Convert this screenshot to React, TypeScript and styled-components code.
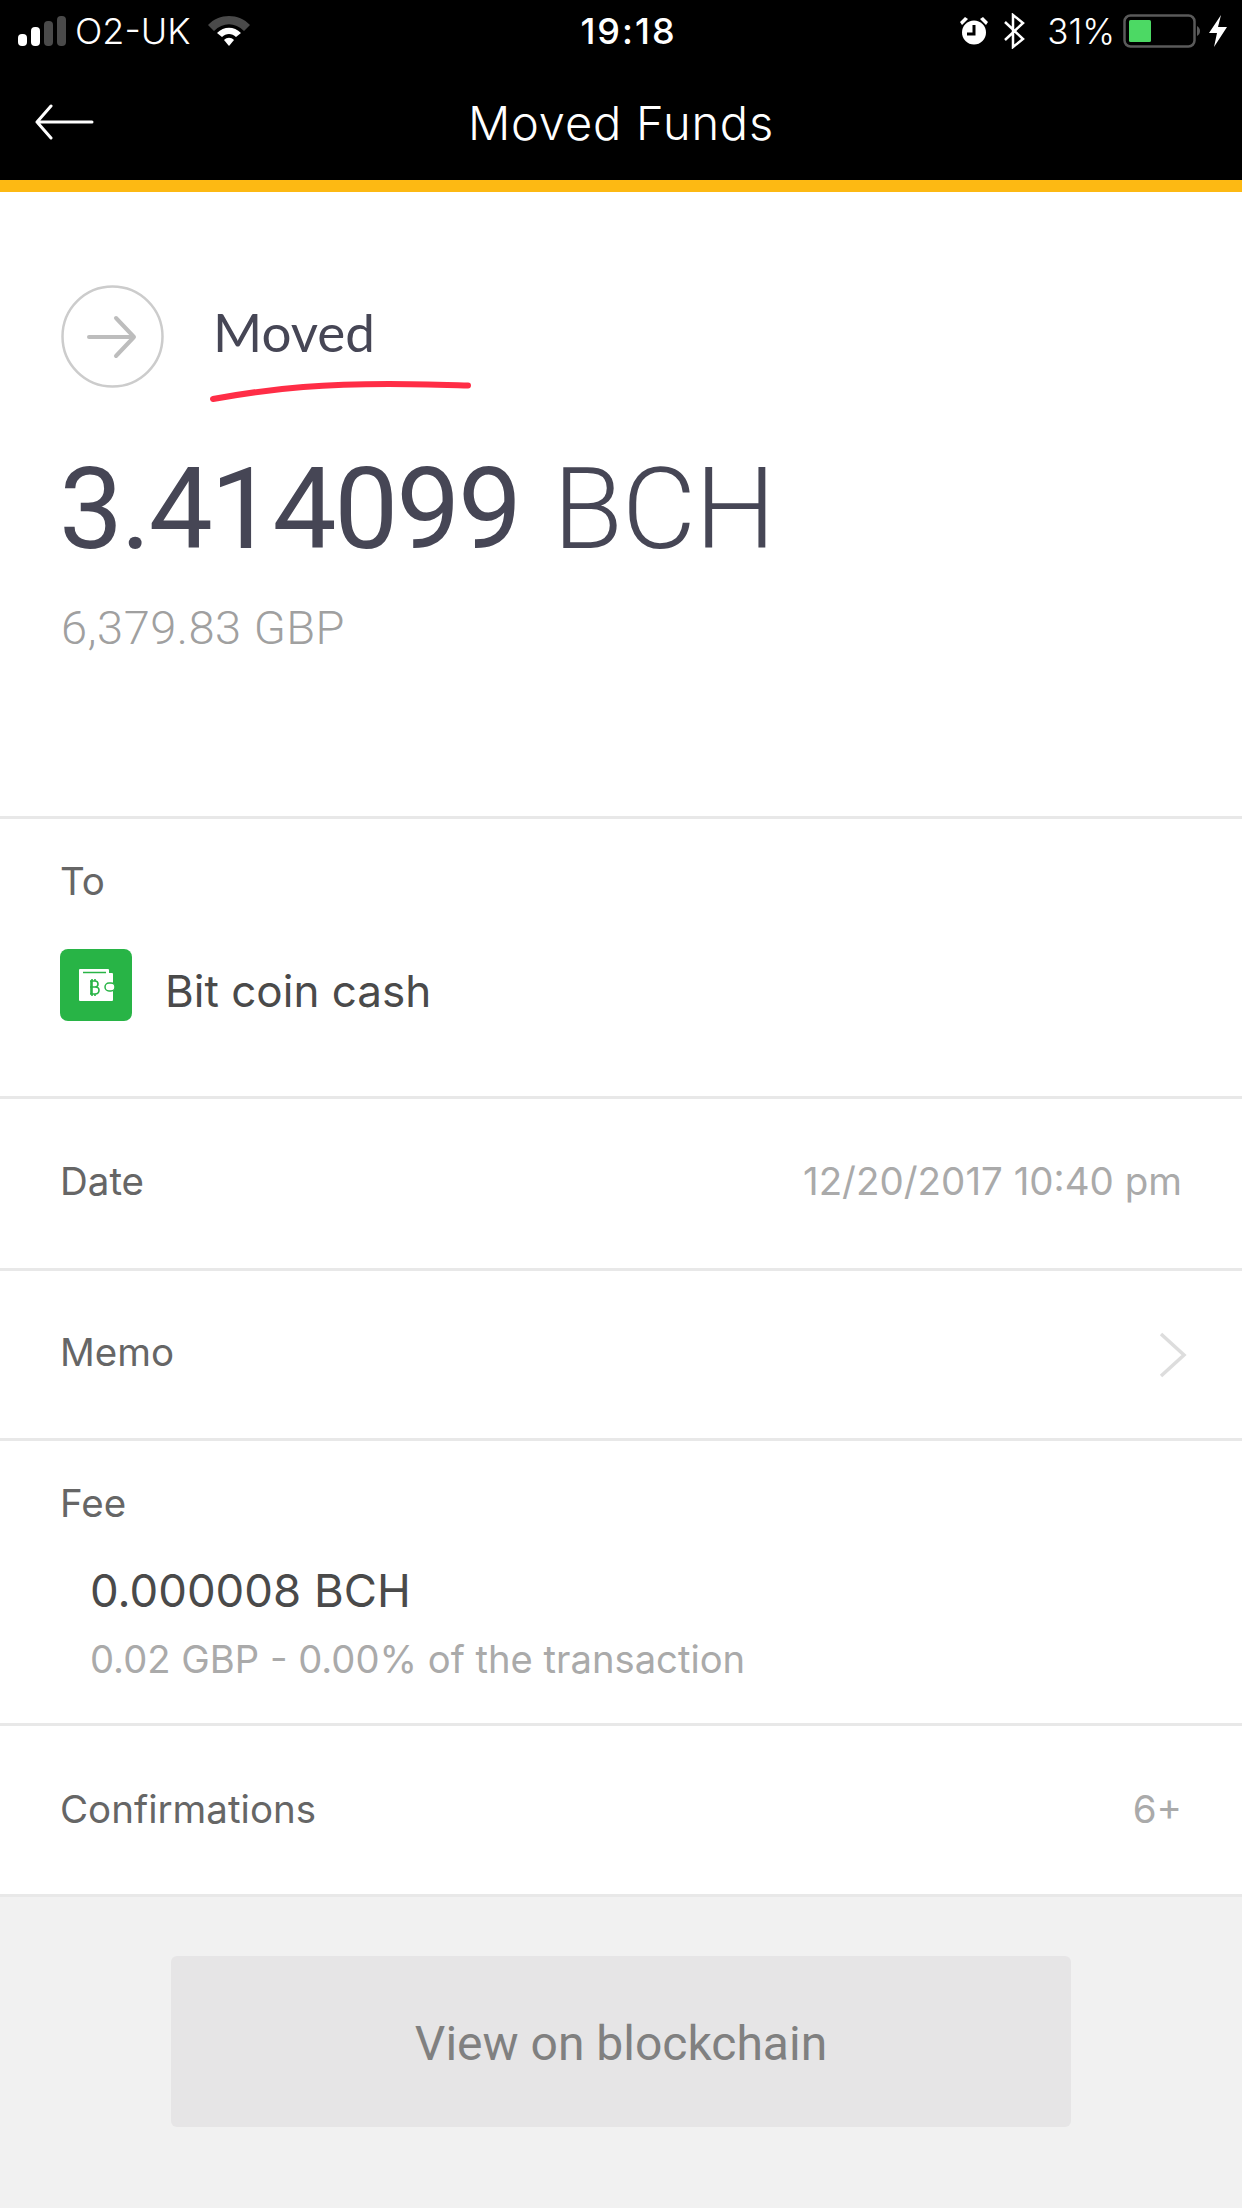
import React from 'react'
import styled, { createGlobalStyle } from 'styled-components'

const GlobalStyle = createGlobalStyle`
    html, body {
        margin: 0;
        padding: 0;
        background: #ffffff;
    }
    * {
        box-sizing: border-box;
    }
`

const Screen = styled.div`
    width: 1242px;
    height: 2208px;
    display: flex;
    flex-direction: column;
    overflow: hidden;
    background: #f1f1f1;
    font-family: Inter, "Liberation Sans", sans-serif;
`

const Header = styled.div`
    height: 192px;
    flex: none;
    background: #000000;
    border-bottom: 12px solid #fdb913;
    color: #ffffff;
`

const StatusBar = styled.div`
    height: 62px;
    display: grid;
    grid-template-columns: 1fr auto 1fr;
    align-items: center;
    padding: 0 15px 0 18px;
    font-size: 35px;
`

const StatusLeft = styled.div`
    display: flex;
    align-items: center;
`

const StatusRight = styled.div`
    display: flex;
    align-items: center;
    justify-content: flex-end;
`

const Carrier = styled.span`
    font-size: 36px;
    font-weight: 300;
    margin: 0 17px 0 9px;
`

const Clock = styled.span`
    font-weight: 500;
    font-size: 36px;
    letter-spacing: 2px;
    padding-left: 12px;
`

const Percent = styled.span`
    font-weight: 300;
    margin: 0 8px 0 22px;
`

const IconGap = styled.span<{ $width: number }>`
    width: ${p => p.$width}px;
`

const NavBar = styled.div`
    height: 106px;
    position: relative;
    display: flex;
    align-items: center;
    justify-content: center;
    padding-top: 14px;
    font-size: 47px;
    font-weight: 300;
    letter-spacing: 0.8px;
`

const BackIcon = styled.svg`
    position: absolute;
    left: 34px;
    top: 42px;
`

const Hero = styled.div`
    height: 627px;
    flex: none;
    background: #ffffff;
    padding: 93px 0 0 61px;
    border-bottom: 3px solid #e8e8e8;
`

const KindRow = styled.div`
    display: flex;
    align-items: center;
    gap: 49px;
    position: relative;
    color: #464655;
    font-family: Lato, sans-serif;
    font-size: 53px;
`

const KindText = styled.span`
    position: relative;
    top: -5px;
`

const Underline = styled.svg`
    position: absolute;
    left: 148px;
    top: 90px;
`

const Amount = styled.div`
    margin-top: 56px;
    margin-left: -2px;
    color: #464655;
    font-family: Roboto, sans-serif;
    font-size: 114px;
    line-height: 130px;
    font-weight: 400;
    letter-spacing: -2.2px;
`

const AmountUnit = styled.span`
    margin-left: 7px;
    font-weight: 300;
    letter-spacing: -1px;
`

const Fiat = styled.div`
    margin-top: 26px;
    color: #a0a0a0;
    font-family: Roboto, sans-serif;
    font-weight: 300;
    font-size: 47px;
    letter-spacing: 0.5px;
`

const Row = styled.div<{ $height: number }>`
    height: ${p => p.$height}px;
    flex: none;
    background: #ffffff;
    border-bottom: 3px solid #e8e8e8;
    padding: 0 60px 0 60px;
    display: flex;
    align-items: center;
    justify-content: space-between;
`

const StackRow = styled(Row)`
    display: block;
`

const Label = styled.div<{ $top?: number; $bottom?: number }>`
    padding-top: ${p => p.$top ?? 0}px;
    padding-bottom: ${p => p.$bottom ?? 0}px;
    font-size: 38.5px;
    font-weight: 400;
    color: #666666;
`

const Value = styled.div<{ $bottom?: number }>`
    padding-bottom: ${p => p.$bottom ?? 0}px;
    font-size: 38.5px;
    font-weight: 400;
    color: #aaaaaa;
`

const ToTarget = styled.div`
    display: flex;
    align-items: center;
    gap: 33px;
    margin-top: 45px;
    font-size: 44px;
    font-weight: 400;
    color: #4a4a4a;
`

const ToName = styled.span`
    padding-top: 12px;
`

const FeeAmount = styled.div`
    margin: 37px 0 0 30px;
    font-size: 45.5px;
    color: #4a4a4a;
`

const FeeNote = styled.div`
    margin: 18px 0 0 30px;
    font-size: 38.2px;
    color: #aaaaaa;
`

const MemoChevron = styled.svg`
    margin-right: -6px;
`

const Footer = styled.div`
    flex: 1;
    padding-top: 59px;
    display: flex;
    justify-content: center;
`

const BlockchainButton = styled.button`
    width: 900px;
    height: 171px;
    padding-top: 5px;
    border: none;
    border-radius: 6px;
    background: #e6e5e6;
    color: #808080;
    font-family: Roboto, sans-serif;
    font-size: 48px;
`

const SignalBars = () => (
    <svg width="48" height="30" viewBox="0 0 48 30">
        <rect x="0" y="18" width="9" height="12" rx="4" fill="#fff" />
        <rect x="13" y="11" width="9" height="19" rx="4" fill="#fff" />
        <rect x="26" y="5" width="9" height="25" rx="4" fill="#4a4a4a" />
        <rect x="39" y="0" width="9" height="30" rx="4" fill="#4a4a4a" />
    </svg>
)

const WifiIcon = () => (
    <svg width="42" height="30" viewBox="0 0 42 30">
        <path d="M0 9 C11 -3 31 -3 42 9 L36 15 C27 6 15 6 6 15 Z" fill="#4a4a4a" />
        <path d="M9 17 C16 10 26 10 33 17 L28 21 C24 17 18 17 14 21 Z" fill="#fff" />
        <path d="M16 24 C19 21 23 21 26 24 L21 30 Z" fill="#fff" />
    </svg>
)

const AlarmIcon = () => (
    <svg width="28" height="28" viewBox="0 0 28 28">
        <circle cx="14" cy="15.5" r="12" fill="#fff" />
        <path d="M0 5 L5 0 L8 2 L2 8 Z M28 5 L23 0 L20 2 L26 8 Z" fill="#fff" />
        <path d="M14 8 V17 H7" fill="none" stroke="#000" strokeWidth="3" />
    </svg>
)

const BluetoothIcon = () => (
    <svg width="22" height="36" viewBox="0 0 22 36">
        <path d="M2 9 L20 26 L10 34 V2 L20 10 L2 27" fill="none" stroke="#fff" strokeWidth="2.5" />
    </svg>
)

const BatteryIcon = () => (
    <svg width="78" height="34" viewBox="0 0 78 34">
        <rect x="1.5" y="1.5" width="70" height="31" rx="6" fill="none" stroke="#5a5a5a" strokeWidth="2.5" />
        <rect x="6" y="6" width="22" height="22" rx="1.5" fill="#4cd964" />
        <path d="M74 12 C78 14 78 20 74 22 Z" fill="#5a5a5a" />
    </svg>
)

const BoltIcon = () => (
    <svg width="18" height="32" viewBox="0 0 18 32">
        <path d="M12 0 L0 18 H8 L5 32 L18 12 H9 Z" fill="#fff" />
    </svg>
)

const WalletIcon = () => (
    <svg width="72" height="72" viewBox="0 0 72 72">
        <rect width="72" height="72" rx="8" fill="#28b446" />
        <path d="M19 21 Q19 20 20 20 H48 Q49 20 49 21 V24 H52 Q53 24 53 25 V51 Q53 52 52 52 H20 Q19 52 19 51 Z" fill="#fff" />
        <path d="M23 23.5 H46" stroke="#28b446" strokeWidth="1.5" />
        <rect x="45" y="34" width="10" height="8" rx="4" fill="#fff" stroke="#28b446" strokeWidth="1.5" />
        <path d="M30 32 H35 Q38 32 38 35 Q38 38 35 38 H30 M35 38 Q39 38 39 41 Q39 45 35 45 H30 M31 32 V45 M32 30 V47 M35 30 V32 M35 45 V47" fill="none" stroke="#28b446" strokeWidth="1.6" />
    </svg>
)

const App = () => {
    return (
        <>
            <GlobalStyle />
            <Screen>
                <Header>
                    <StatusBar>
                        <StatusLeft>
                            <SignalBars />
                            <Carrier>O2-UK</Carrier>
                            <WifiIcon />
                        </StatusLeft>
                        <Clock>19:18</Clock>
                        <StatusRight>
                            <AlarmIcon />
                            <IconGap $width={15} />
                            <BluetoothIcon />
                            <Percent>31%</Percent>
                            <BatteryIcon />
                            <IconGap $width={8} />
                            <BoltIcon />
                        </StatusRight>
                    </StatusBar>
                    <NavBar>
                        <BackIcon width="60" height="36" viewBox="0 0 60 36">
                            <path d="M58 18 H3 M17 2 L3 18 L17 34" fill="none" stroke="#fff" strokeWidth="3" strokeLinecap="round" strokeLinejoin="round" />
                        </BackIcon>
                        Moved Funds
                    </NavBar>
                </Header>
                <Hero>
                    <KindRow>
                        <svg width="103" height="103" viewBox="0 0 103 103">
                            <circle cx="51.5" cy="51.5" r="50" fill="none" stroke="#cccccc" strokeWidth="2.5" />
                            <path d="M28 52 H73 M55 33 L73 52 L55 71" fill="none" stroke="#bdbdbd" strokeWidth="4" strokeLinecap="round" strokeLinejoin="round" />
                        </svg>
                        <KindText>Moved</KindText>
                        <Underline width="264" height="30" viewBox="0 0 264 30">
                            <path d="M4 24 C70 12 120 9 180 9 C210 9 240 10 259 10.5" fill="none" stroke="#ff2d46" strokeWidth="6" strokeLinecap="round" />
                        </Underline>
                    </KindRow>
                    <Amount>3.414099 <AmountUnit>BCH</AmountUnit></Amount>
                    <Fiat>6,379.83 GBP</Fiat>
                </Hero>
                <StackRow $height={280}>
                    <Label $top={39}>To</Label>
                    <ToTarget><WalletIcon /><ToName>Bit coin cash</ToName></ToTarget>
                </StackRow>
                <Row $height={172}>
                    <Label $bottom={6}>Date</Label>
                    <Value $bottom={6}>12/20/2017 10:40 pm</Value>
                </Row>
                <Row $height={170}>
                    <Label $bottom={6}>Memo</Label>
                    <MemoChevron width="30" height="46" viewBox="0 0 30 46">
                        <path d="M3 2 L26 23 L3 44" fill="none" stroke="#dddddd" strokeWidth="3.5" />
                    </MemoChevron>
                </Row>
                <StackRow $height={285}>
                    <Label $top={39}>Fee</Label>
                    <FeeAmount>0.000008 BCH</FeeAmount>
                    <FeeNote>0.02 GBP - 0.00% of the transaction</FeeNote>
                </StackRow>
                <Row $height={171}>
                    <Label $bottom={2}>Confirmations</Label>
                    <Value $bottom={2}>6+</Value>
                </Row>
                <Footer>
                    <BlockchainButton>View on blockchain</BlockchainButton>
                </Footer>
            </Screen>
        </>
    )
}

export default App
